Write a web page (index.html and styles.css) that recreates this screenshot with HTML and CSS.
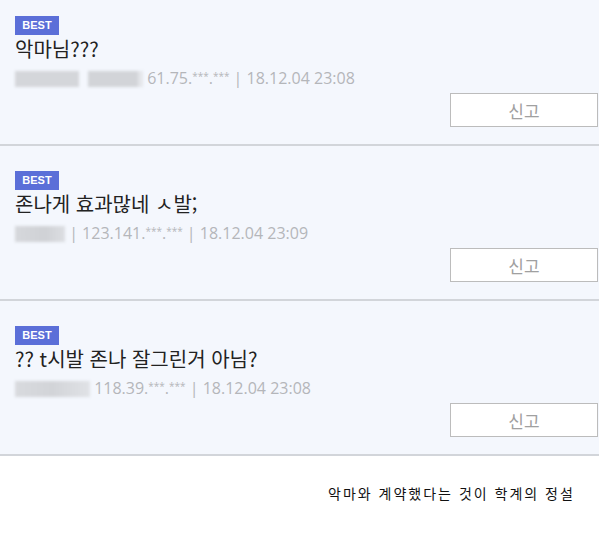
FILE: index.html
```html
<!DOCTYPE html>
<html lang="ko">
<head>
    <meta charset="UTF-8">
    <meta name="viewport" content="width=device-width, initial-scale=1.0">
    <title>베스트 댓글</title>
    <link rel="stylesheet" href="styles.css">
</head>
<body>
<div class="comments">
    <div class="comment">
        <span class="badge">BEST</span>
        <div class="comment-text">악마님???</div>
        <div class="comment-meta"><span class="nick nick-long"></span> 61.75.<sup>***</sup>.<sup>***</sup> | 18.12.04 23:08</div>
        <button class="report-btn">신고</button>
    </div>
    <div class="comment">
        <span class="badge">BEST</span>
        <div class="comment-text">존나게 효과많네 ㅅ발;</div>
        <div class="comment-meta"><span class="nick nick-short"></span> | 123.141.<sup>***</sup>.<sup>***</sup> | 18.12.04 23:09</div>
        <button class="report-btn">신고</button>
    </div>
    <div class="comment">
        <span class="badge">BEST</span>
        <div class="comment-text">?? t시발 존나 잘그린거 아님?</div>
        <div class="comment-meta"><span class="nick nick-mid"></span> 118.39.<sup>***</sup>.<sup>***</sup> | 18.12.04 23:08</div>
        <button class="report-btn">신고</button>
    </div>
</div>
<p class="caption">악마와 계약했다는 것이 학계의 정설</p>
</body>
</html>
```

FILE: styles.css
```css
* {
    margin: 0;
    padding: 0;
    box-sizing: border-box;
}

body {
    background: #fff;
    font-family: "Noto Sans CJK KR", "Noto Sans", sans-serif;
    overflow: hidden;
}

.comments {
    margin-top: -9px;
}

.comment {
    display: flex;
    flex-direction: column;
    align-items: flex-start;
    height: 155px;
    padding: 25px 1px 17px 15px;
    background: #f4f7fd;
    border-bottom: 2px solid #d2d5da;
}

.badge {
    display: inline-block;
    width: 44px;
    height: 19px;
    line-height: 19px;
    background: #5b6fd8;
    color: #fff;
    font-family: "Liberation Sans", Arial, sans-serif;
    font-size: 11px;
    font-weight: bold;
    text-align: center;
}

.comment-text {
    margin-top: 2px;
    font-size: 20px;
    line-height: 24px;
    color: #222;
}

.comment-meta {
    margin-top: 7px;
    height: 20px;
    font-family: "Open Sans", "Noto Sans", sans-serif;
    font-size: 16px;
    line-height: 20px;
    color: #b4b6ba;
    white-space: nowrap;
}

.comment-meta sup {
    font-size: 10px;
    line-height: 0;
    vertical-align: 4px;
}

.nick {
    display: inline-block;
    height: 16px;
    vertical-align: -3px;
    filter: blur(1.5px);
}

.nick-long {
    width: 128px;
    background: linear-gradient(90deg, #d4d6da 0 50%, transparent 50% 57%, #d2d4d8 57% 96%, #e4e6ea 96%);
}

.nick-short {
    width: 50px;
    background: linear-gradient(90deg, #d6d8dc, #cfd1d5 60%, #dcdee2);
}

.nick-mid {
    width: 75px;
    background: linear-gradient(90deg, #d8dade, #d2d4d8 50%, #e0e2e6);
}

.report-btn {
    align-self: flex-end;
    margin-top: auto;
    width: 148px;
    height: 34px;
    background: #fff;
    border: 1px solid #bcbcbc;
    color: #a0a0a0;
    font-family: "Noto Sans CJK KR", sans-serif;
    font-size: 17px;
}

.caption {
    padding: 27px 0 0 328px;
    font-family: "Noto Sans CJK KR", sans-serif;
    font-size: 14px;
    letter-spacing: 2px;
    color: #111;
}
```
